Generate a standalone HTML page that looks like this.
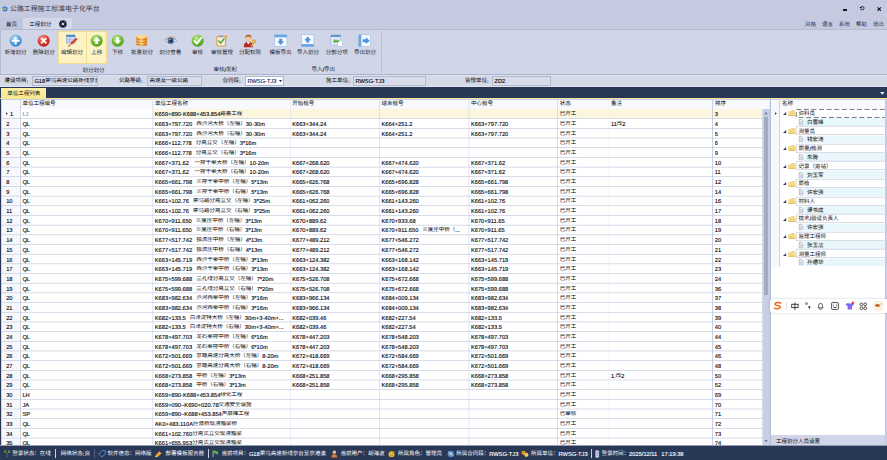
<!DOCTYPE html>
<html lang="zh-CN">
<head>
<meta charset="utf-8">
<title>公路工程施工标准电子化平台</title>
<style>
*{box-sizing:border-box;margin:0;padding:0}
html,body{width:887px;height:460px;overflow:hidden;background:#c5cae0}
body{position:relative;font-family:"Liberation Sans","Noto Sans CJK SC",sans-serif;font-size:5.73px;line-height:8.8px;color:#06060c;text-rendering:geometricPrecision;-webkit-text-stroke:.12px currentColor}
.a{position:absolute}
svg.a{overflow:visible}
.t{position:absolute;white-space:pre;height:8.8px;line-height:8.8px;word-spacing:2.4px}
.c{position:relative;display:inline-block;vertical-align:top;font-family:"Liberation Sans","Noto Sans CJK SC",sans-serif;font-size:5.5px;width:1em;height:1.09em;line-height:1.09em;overflow:visible;color:inherit;-webkit-text-stroke:0}
.cell{overflow:hidden}
.w{color:#fff}
.ti .c{font-size:6.9px;height:1.1em;color:#343848}
.m .c{color:#262e58}
.g .c{color:#23252f}
.in{position:absolute;height:10px;background:#d8dcea;border:1px solid #b0b8cc;box-shadow:inset -.5px -.5px 0 #e3e6f0}
.hl{background:#fdf2c4;border:1px solid #f3dc8f}
.btn{position:absolute;top:34px;width:14px;height:14px}
.btn>svg{position:absolute;left:0;top:0;width:13.4px;height:13.4px;overflow:visible}
</style>
</head>
<body>
<svg class="a" style="left:1.7px;top:6.4px;width:5.7px;height:5.7px" viewBox="0 0 12 12"><circle cx="6" cy="6" r="5.7" fill="#2f78d2"/><path d="M.6 5.2 H6.4 V3.2 L9.4 6.2 L6.4 9.2 V7.4 H3.6 L2.6 10 L.6 7.6Z" fill="#f6cf2e"/><path d="M3.4 2.2 Q6 .6 8.6 2.2" stroke="#cfe4fb" stroke-width="1" fill="none"/></svg>
<div class="t ti" style="left:10px;top:5.6px;height:8px"><span class="c" style="width:13em">公路工程施工标准电子化平台</span></div>
<div class="a" style="left:842.8px;top:8.9px;width:4.5px;height:1.9px;background:#14141c"></div>
<svg class="a" style="left:858.6px;top:5.2px;width:5.9px;height:5.9px" viewBox="0 0 12 12"><path d="M3.2 9.8 H7 A3.4 3.4 0 1 0 3.6 5.6" fill="none" stroke="#14141c" stroke-width="1.7"/><path d="M.6 5.4 L5.6 3.2 L5.2 7.8Z" fill="#14141c"/></svg>
<svg class="a" style="left:876.9px;top:6.9px;width:4.4px;height:4.4px" viewBox="0 0 10 10"><path d="M1 1 L9 9 M9 1 L1 9" stroke="#14141c" stroke-width="2.3"/><rect x="3.4" y="3.4" width="3.2" height="3.2" fill="#14141c"/></svg>
<div class="a" style="left:0px;top:18px;width:23px;height:11px;background:#c0c6dc"></div>
<div class="a" style="left:23px;top:18px;width:49px;height:12px;background:#d4d9ea"></div>
<div class="t" style="left:6px;top:21.5px"><span class="c" style="width:2em">首页</span></div>
<div class="t" style="left:29.3px;top:21.5px"><span class="c" style="width:4em">工程划分</span></div>
<svg class="a" style="left:58.9px;top:19.9px;width:7.8px;height:7.8px" viewBox="0 0 16 16"><circle cx="8" cy="8" r="7.7" fill="#1d2233"/><path d="M5.2 5.2 L10.8 10.8 M10.8 5.2 L5.2 10.8" stroke="#fff" stroke-width="1.9"/></svg>
<div class="t m" style="left:805px;top:21.7px"><span class="c" style="width:2em">风格</span></div>
<div class="t m" style="left:822px;top:21.7px"><span class="c" style="width:2em">语言</span></div>
<div class="t m" style="left:839px;top:21.7px"><span class="c" style="width:2em">系统</span></div>
<div class="t m" style="left:856px;top:21.7px"><span class="c" style="width:2em">帮助</span></div>
<div class="t m" style="left:873px;top:21.7px"><span class="c" style="width:2em">退出</span></div>
<div class="a" style="left:0px;top:29px;width:887px;height:46px;background:#d0d6e7;border-top:1px solid #b3bbd1;border-bottom:1px solid #a9b2c8"></div>
<div class="a" style="left:0px;top:30px;width:1px;height:44px;background:#b4bcd2"></div>
<div class="a hl" style="left:58px;top:31px;width:29px;height:33px"></div>
<div class="a hl" style="left:87px;top:31px;width:20px;height:33px;border-left:none"></div>
<div class="btn" style="left:8.7px"><svg viewBox="0 0 28 28"><defs><radialGradient id="gA" cx=".4" cy=".3" r=".8"><stop offset="0" stop-color="#bfe0fb"/><stop offset=".55" stop-color="#4f9fe0"/><stop offset="1" stop-color="#2a6fc0"/></radialGradient></defs><circle cx="14" cy="14" r="12.6" fill="url(#gA)" stroke="#8fb5dc" stroke-width="1"/><path d="M14 7.5 V20.5 M7.5 14 H20.5" stroke="#fff" stroke-width="4" stroke-linecap="round"/></svg></div>
<div class="t g" style="left:4.4px;top:50.4px"><span class="c" style="width:4em">新增划分</span></div>
<div class="btn" style="left:37.1px"><svg viewBox="0 0 28 28"><defs><radialGradient id="gD" cx=".4" cy=".3" r=".8"><stop offset="0" stop-color="#f59a8f"/><stop offset=".55" stop-color="#d8362b"/><stop offset="1" stop-color="#a81d15"/></radialGradient></defs><circle cx="14" cy="14" r="12.6" fill="url(#gD)"/><path d="M9.5 9.5 L18.5 18.5 M18.5 9.5 L9.5 18.5" stroke="#fff" stroke-width="3.6" stroke-linecap="round"/></svg></div>
<div class="t g" style="left:32.8px;top:50.4px"><span class="c" style="width:4em">删除划分</span></div>
<div class="btn" style="left:65.4px"><svg viewBox="0 0 28 28"><rect x="3" y="2" width="18" height="17" fill="#cfe2f6" stroke="#5c8fc6" stroke-width="1"/><rect x="3" y="2" width="18" height="4" fill="#4f86c6"/><path d="M3 11 H21 M3 15 H21 M10 6 V19" stroke="#7fa6d3" stroke-width="1"/><path d="M9 25 L11 19 L23 8 L26.5 11 L14.5 22.5 Z" fill="#d9412f"/><path d="M9 25 L11 19 L14.5 22.5 Z" fill="#e9c58a"/><path d="M6.5 27 L10 24 L8 22.5Z" fill="#333"/></svg></div>
<div class="t g" style="left:61.1px;top:50.4px"><span class="c" style="width:4em">编辑划分</span></div>
<div class="btn" style="left:90.1px"><svg viewBox="0 0 28 28"><defs><radialGradient id="gU" cx=".4" cy=".3" r=".8"><stop offset="0" stop-color="#c6ec97"/><stop offset=".55" stop-color="#6db830"/><stop offset="1" stop-color="#4b9418"/></radialGradient></defs><circle cx="14" cy="14" r="12.6" fill="url(#gU)"/><path d="M14 6.5 L21 14.5 H16.8 V21 H11.2 V14.5 H7 Z" fill="#fff"/></svg></div>
<div class="t g" style="left:91.3px;top:50.4px"><span class="c" style="width:2em">上移</span></div>
<div class="btn" style="left:110.7px"><svg viewBox="0 0 28 28"><circle cx="14" cy="14" r="12.6" fill="url(#gU)"/><path d="M14 21.5 L21 13.5 H16.8 V7 H11.2 V13.5 H7 Z" fill="#fff"/></svg></div>
<div class="t g" style="left:111.9px;top:50.4px"><span class="c" style="width:2em">下移</span></div>
<div class="btn" style="left:135.3px"><svg viewBox="0 0 28 28"><defs><linearGradient id="gB" x1="0" x2="1"><stop offset="0" stop-color="#e88a1a"/><stop offset=".45" stop-color="#ffe2a0"/><stop offset="1" stop-color="#e27c10"/></linearGradient></defs><rect x="3" y="2.5" width="22" height="23" rx="4.5" fill="url(#gB)"/><ellipse cx="14" cy="5" rx="11" ry="3" fill="#ffd98a"/><path d="M3 10.5 Q14 14.5 25 10.5 M3 16 Q14 20 25 16 M3 21.5 Q14 25.5 25 21.5" stroke="#c8690c" stroke-width="1.3" fill="none"/></svg></div>
<div class="t g" style="left:131px;top:50.4px"><span class="c" style="width:4em">批量划分</span></div>
<div class="btn" style="left:163.5px"><svg viewBox="0 0 28 28"><path d="M1.5 14 Q14 2.5 26.5 14 Q14 25 1.5 14Z" fill="#eef2f8" stroke="#7b8797" stroke-width="1.3"/><path d="M2 12 Q14 0 26 11" stroke="#c89060" stroke-width="1.6" fill="none"/><circle cx="14" cy="14" r="6.6" fill="#3f6596"/><circle cx="14" cy="14" r="3.2" fill="#1a2a44"/><circle cx="11.8" cy="11.8" r="1.5" fill="#e8f0fb"/></svg></div>
<div class="t g" style="left:159.2px;top:50.4px"><span class="c" style="width:4em">划分查看</span></div>
<div class="btn" style="left:190.7px"><svg viewBox="0 0 28 28"><circle cx="14" cy="14" r="12.6" fill="url(#gU)"/><path d="M7 14.5 L12 20 L22 7.5" stroke="#fff" stroke-width="3.8" fill="none" stroke-linecap="round" stroke-linejoin="round"/></svg></div>
<div class="t g" style="left:191.9px;top:50.4px"><span class="c" style="width:2em">审核</span></div>
<div class="btn" style="left:215.3px"><svg viewBox="0 0 28 28"><rect x="4" y="5" width="18" height="20" rx="2" fill="#f7efe0" stroke="#e09b3a" stroke-width="2.2"/><rect x="9" y="2.5" width="8" height="5" rx="1.5" fill="#9aa6b6"/><path d="M8 14.5 L12 19 L19 10" stroke="#55a52a" stroke-width="3" fill="none" stroke-linecap="round"/><path d="M23 1 L24.5 5 L28 6 L24.5 7.5 L23 11 L21.5 7.5 L18 6 L21.5 5 Z" fill="#f2a42c"/></svg></div>
<div class="t g" style="left:211px;top:50.4px"><span class="c" style="width:4em">审核管理</span></div>
<div class="btn" style="left:243.3px"><svg viewBox="1.5 1.5 26 26"><path d="M3 27 Q3 16.5 12 16.5 Q21 16.5 21 27 Z" fill="#b82a22"/><path d="M8.5 17 L12 22 L15.5 17Z" fill="#f4f4f4"/><circle cx="12" cy="10" r="6" fill="#f0c49a"/><path d="M5.8 9.5 Q6 2.8 12 3 Q18 2.8 18.2 9.5 Q15 5.5 12 6.2 Q9 5.5 5.8 9.5Z" fill="#9b5a22"/><circle cx="23" cy="16" r="3.4" fill="#f0b63a" stroke="#c98a1a" stroke-width=".8"/><path d="M21.5 18.5 L16 25 L18.5 26.5 L23.5 19.5Z" fill="#e8a92c"/></svg></div>
<div class="t g" style="left:239px;top:50.4px"><span class="c" style="width:4em">分配权限</span></div>
<div class="btn" style="left:273.8px"><svg viewBox="0 0 28 28"><rect x="1" y="1.5" width="26" height="25" fill="#f5f8fd" stroke="#9dbbe0" stroke-width="1.3"/><rect x="1" y="1.5" width="26" height="5.5" fill="#6aa5e6"/><path d="M14 23 L21 15 H17 V10 H11 V15 H7 Z" fill="#4a94e2"/></svg></div>
<div class="t g" style="left:269.5px;top:50.4px"><span class="c" style="width:4em">模板导出</span></div>
<div class="btn" style="left:301.3px"><svg viewBox="0 0 28 28"><rect x="1" y="1.5" width="26" height="25" fill="#f5f8fd" stroke="#9dbbe0" stroke-width="1.3"/><rect x="1" y="21" width="26" height="5.5" fill="#6aa5e6"/><path d="M14 5 L21 13 H17 V18 H11 V13 H7 Z" fill="#4a94e2"/></svg></div>
<div class="t g" style="left:297px;top:50.4px"><span class="c" style="width:4em">导入划分</span></div>
<div class="btn" style="left:330px"><svg viewBox="0 0 28 28"><rect x="2" y="2" width="20" height="21" fill="#f3f7fc" stroke="#8fb1d6" stroke-width="1.2"/><rect x="2" y="2" width="20" height="4.5" fill="#5e95d2"/><path d="M2 12 H22 M2 17.5 H22 M9 6.5 V23 M15.5 6.5 V23" stroke="#a9c3e2" stroke-width="1"/><rect x="15.5" y="13" width="11" height="13" fill="#fff" stroke="#8fb1d6" stroke-width="1"/><path d="M6 15 L11 10.5 V13 H17 L21 15 L17 17 H11 V19.5 Z" fill="#5bb030"/></svg></div>
<div class="t g" style="left:325.7px;top:50.4px"><span class="c" style="width:4em">分部分项</span></div>
<div class="btn" style="left:358.3px"><svg viewBox="0 0 28 28"><rect x="1.5" y="1.5" width="25" height="25" fill="#f5f8fd" stroke="#9dbbe0" stroke-width="1.3"/><rect x="1.5" y="1.5" width="5.5" height="25" fill="#6aa5e6"/><path d="M24.5 14 L16.5 7 V11 H10 V17 H16.5 V21 Z" fill="#4a94e2"/></svg></div>
<div class="t g" style="left:354px;top:50.4px"><span class="c" style="width:4em">导出划分</span></div>
<div class="t g" style="left:82.6px;top:67.5px"><span class="c" style="width:4em">划分划分</span></div>
<div class="t g" style="left:213.5px;top:67px"><span class="c" style="width:2em">审核</span>/<span class="c" style="width:2em">发起</span></div>
<div class="t g" style="left:311.5px;top:67px"><span class="c" style="width:2em">导入</span>/<span class="c" style="width:2em">导出</span></div>
<div class="a" style="left:187px;top:31px;width:1px;height:42px;background:#d4d9e9"></div>
<div class="a" style="left:381px;top:31px;width:1px;height:42px;background:#b9c1d6"></div>
<div class="a" style="left:0px;top:75px;width:887px;height:12px;background:#d5dae9;border-top:1px solid #dfe3ee;border-bottom:1px solid #e0e4ef"></div>
<div class="t" style="left:4.6px;top:78px"><span class="c" style="width:4em">建设项目</span>:</div>
<div class="in" style="left:32px;top:76px;width:66px"></div>
<div class="t cell" style="left:34.4px;top:78px;width:62.4px">G18<span class="c" style="width:16em">荣乌高速公路新线京台高速至京港澳</span></div>
<div class="t" style="left:119px;top:78px"><span class="c" style="width:4em">公路等级</span>:</div>
<div class="in" style="left:147px;top:76px;width:55px"></div>
<div class="t cell" style="left:149.4px;top:78px;width:51.4px"><span class="c" style="width:7em">高速及一级公路</span></div>
<div class="t" style="left:222.6px;top:78px"><span class="c" style="width:3em">合同段</span>:</div>
<div class="in" style="left:245px;top:76px;width:39px;background:#fff"></div>
<div class="t cell" style="left:247.4px;top:78px;width:35.4px;color:#1c1c5c">RWSG-TJ3</div>
<svg class="a" style="left:278.6px;top:80.4px;width:3px;height:2.2px" viewBox="0 0 6 4"><path d="M0 0 H6 L3 4Z" fill="#222"/></svg>
<div class="t" style="left:326px;top:78px"><span class="c" style="width:4em">施工单位</span>:</div>
<div class="in" style="left:353px;top:76px;width:73px"></div>
<div class="t cell" style="left:355.4px;top:78px;width:69.4px">RWSG-TJ3</div>
<div class="t" style="left:465px;top:78px"><span class="c" style="width:4em">监理单位</span>:</div>
<div class="in" style="left:492px;top:76px;width:59px"></div>
<div class="t cell" style="left:494.4px;top:78px;width:55.4px">ZD2</div>
<div class="a" style="left:0px;top:87px;width:887px;height:11px;background:#2a3857"></div>
<div class="a" style="left:1px;top:88px;width:45px;height:10px;background:linear-gradient(#fdf1a6,#f9e790)"></div>
<div class="t" style="left:7.2px;top:90.9px"><span class="c" style="width:6em">单位工程列表</span></div>
<svg class="a" style="left:879.6px;top:91.6px;width:4.6px;height:2.8px" viewBox="0 0 8 5"><path d="M0 0 H8 L4 5Z" fill="#eef1f8"/></svg>
<div class="a" style="left:0px;top:98px;width:887px;height:1px;background:#f3e394"></div>
<div class="a" style="left:0px;top:99px;width:1px;height:347px;background:#2a3857"></div>
<div class="a" style="left:1px;top:99px;width:769px;height:347px;background:#fff"></div>
<div class="a" style="left:1px;top:99px;width:769px;height:10px;background:#f8f9fc;border-top:1px solid #cdd3e3"></div>
<div class="t" style="left:22.5px;top:101px"><span class="c" style="width:6em">单位工程编号</span></div>
<div class="t" style="left:154.9px;top:101px"><span class="c" style="width:6em">单位工程名称</span></div>
<div class="t" style="left:292.3px;top:101px"><span class="c" style="width:4em">开始桩号</span></div>
<div class="t" style="left:381.5px;top:101px"><span class="c" style="width:4em">结束桩号</span></div>
<div class="t" style="left:471px;top:101px"><span class="c" style="width:4em">中心桩号</span></div>
<div class="t" style="left:559.8px;top:101px"><span class="c" style="width:2em">状态</span></div>
<div class="t" style="left:611px;top:101px"><span class="c" style="width:2em">备注</span></div>
<div class="t" style="left:714.9px;top:101px"><span class="c" style="width:2em">排序</span></div>
<div class="a" style="left:1px;top:109px;width:19.3px;height:337px;background:#f7f8fc"></div>
<div class="a" style="left:153.2px;top:108.75px;width:609px;height:9.5px;background:#fdf6df"></div>
<div class="a" style="left:762.3px;top:109px;width:7.7px;height:337px;background:linear-gradient(90deg,#d8dcea,#c8cfe2 25%,#c8cfe2)"></div>
<div class="a" style="left:763.8px;top:117.4px;width:4.3px;height:177.4px;background:#a0aac2"></div>
<svg class="a" style="left:763.9px;top:112px;width:4px;height:2.3px" viewBox="0 0 8 5"><path d="M0 5 H8 L4 0Z" fill="#6a7698"/></svg>
<svg class="a" style="left:763.9px;top:440px;width:4px;height:2.3px" viewBox="0 0 8 5"><path d="M0 0 H8 L4 5Z" fill="#6a7698"/></svg>
<svg class="a" style="left:0px;top:0px;width:887px;height:460px" viewBox="0 0 887 460"><rect x="1.1" y="99" width=".55" height="347" fill="#b9c1d8"/><rect x="20.2" y="100" width=".8" height="346" fill="#c3c9de"/><rect x="769.8" y="99" width="1" height="347" fill="#b3bcd4"/><rect x="152.6" y="100" width="0.5" height="346" fill="#c4c9dd"/><rect x="290" y="100" width="0.5" height="346" fill="#dde0ec"/><rect x="379.2" y="100" width="0.5" height="346" fill="#c9cde0"/><rect x="468.7" y="100" width="0.5" height="346" fill="#c9cde0"/><rect x="557.4" y="100" width="0.55" height="346" fill="#c0c5da"/><rect x="608.7" y="100" width="0.4" height="346" fill="#e6e8f1"/><rect x="712.2" y="100" width="0.85" height="346" fill="#bfc5db"/><rect x="1.6" y="118.40" width="760.7" height=".55" fill="#b9bfd8"/><rect x="1.6" y="128.08" width="760.7" height=".55" fill="#b9bfd8"/><rect x="1.6" y="137.75" width="760.7" height=".55" fill="#b9bfd8"/><rect x="1.6" y="147.43" width="760.7" height=".55" fill="#b9bfd8"/><rect x="1.6" y="157.11" width="760.7" height=".55" fill="#b9bfd8"/><rect x="1.6" y="166.79" width="760.7" height=".55" fill="#b9bfd8"/><rect x="1.6" y="176.47" width="760.7" height=".55" fill="#b9bfd8"/><rect x="1.6" y="186.14" width="760.7" height=".55" fill="#b9bfd8"/><rect x="1.6" y="195.82" width="760.7" height=".55" fill="#b9bfd8"/><rect x="1.6" y="205.50" width="760.7" height=".55" fill="#b9bfd8"/><rect x="1.6" y="215.18" width="760.7" height=".55" fill="#b9bfd8"/><rect x="1.6" y="224.86" width="760.7" height=".55" fill="#b9bfd8"/><rect x="1.6" y="234.53" width="760.7" height=".55" fill="#b9bfd8"/><rect x="1.6" y="244.21" width="760.7" height=".55" fill="#b9bfd8"/><rect x="1.6" y="253.89" width="760.7" height=".55" fill="#b9bfd8"/><rect x="1.6" y="263.57" width="760.7" height=".55" fill="#b9bfd8"/><rect x="1.6" y="273.25" width="760.7" height=".55" fill="#b9bfd8"/><rect x="1.6" y="282.92" width="760.7" height=".55" fill="#b9bfd8"/><rect x="1.6" y="292.60" width="760.7" height=".55" fill="#b9bfd8"/><rect x="1.6" y="302.28" width="760.7" height=".55" fill="#b9bfd8"/><rect x="1.6" y="311.96" width="760.7" height=".55" fill="#b9bfd8"/><rect x="1.6" y="321.64" width="760.7" height=".55" fill="#b9bfd8"/><rect x="1.6" y="331.31" width="760.7" height=".55" fill="#b9bfd8"/><rect x="1.6" y="340.99" width="760.7" height=".55" fill="#b9bfd8"/><rect x="1.6" y="350.67" width="760.7" height=".55" fill="#b9bfd8"/><rect x="1.6" y="360.35" width="760.7" height=".55" fill="#b9bfd8"/><rect x="1.6" y="370.03" width="760.7" height=".55" fill="#b9bfd8"/><rect x="1.6" y="379.70" width="760.7" height=".55" fill="#b9bfd8"/><rect x="1.6" y="389.38" width="760.7" height=".55" fill="#b9bfd8"/><rect x="1.6" y="399.06" width="760.7" height=".55" fill="#b9bfd8"/><rect x="1.6" y="408.74" width="760.7" height=".55" fill="#b9bfd8"/><rect x="1.6" y="418.42" width="760.7" height=".55" fill="#b9bfd8"/><rect x="1.6" y="428.09" width="760.7" height=".55" fill="#b9bfd8"/><rect x="1.6" y="437.77" width="760.7" height=".55" fill="#b9bfd8"/><rect x="1.6" y="447.45" width="760.7" height=".55" fill="#b9bfd8"/></svg>
<svg class="a" style="left:6px;top:112.25px;width:1.8px;height:3px" viewBox="0 0 4 6"><path d="M0 0 L4 3 L0 6Z" fill="#222"/></svg>
<div class="t" style="left:9.9px;top:111px">1</div>
<div class="t cell" style="left:22.4px;top:111px;width:129px;color:#8d86b8">LJ</div>
<div class="t cell" style="left:154.8px;top:111px;width:134px">K659+890-K688+453.854<span class="c" style="width:4em">路基工程</span></div>
<div class="t cell" style="left:559.7px;top:111.35px;width:47.8px"><span class="c" style="width:3em">已开工</span></div>
<div class="t cell" style="left:714.8px;top:111px;width:46.2px">3</div>
<div class="t" style="left:6.2px;top:121px">2</div>
<div class="t cell" style="left:22.4px;top:121px;width:129px">QL</div>
<div class="t cell" style="left:154.8px;top:121px;width:134px">K663+797.720 <span class="c" style="width:9em">西沙河大桥（左幅）</span>30-30m</div>
<div class="t cell" style="left:292.2px;top:121px;width:85.8px">K663+344.24</div>
<div class="t cell" style="left:381.4px;top:121px;width:86.1px">K664+251.2</div>
<div class="t cell" style="left:470.9px;top:121px;width:85.4px">K663+797.720</div>
<div class="t cell" style="left:559.7px;top:121.03px;width:47.8px"><span class="c" style="width:3em">已开工</span></div>
<div class="t cell" style="left:610.9px;top:121px;width:100.5px">11<span class="c" style="width:1em">改</span>2</div>
<div class="t cell" style="left:714.8px;top:121px;width:46.2px">4</div>
<div class="t" style="left:6.2px;top:131px">3</div>
<div class="t cell" style="left:22.4px;top:131px;width:129px">QL</div>
<div class="t cell" style="left:154.8px;top:131px;width:134px">K663+797.720 <span class="c" style="width:9em">西沙河大桥（右幅）</span>30-30m</div>
<div class="t cell" style="left:292.2px;top:131px;width:85.8px">K663+344.24</div>
<div class="t cell" style="left:381.4px;top:131px;width:86.1px">K664+251.2</div>
<div class="t cell" style="left:470.9px;top:131px;width:85.4px">K663+797.720</div>
<div class="t cell" style="left:559.7px;top:130.71px;width:47.8px"><span class="c" style="width:3em">已开工</span></div>
<div class="t cell" style="left:714.8px;top:131px;width:46.2px">5</div>
<div class="t" style="left:6.2px;top:140px">4</div>
<div class="t cell" style="left:22.4px;top:140px;width:129px">QL</div>
<div class="t cell" style="left:154.8px;top:140px;width:134px">K666+112.778 <span class="c" style="width:8em">分离立交（左幅）</span>3*16m</div>
<div class="t cell" style="left:559.7px;top:140.38px;width:47.8px"><span class="c" style="width:3em">已开工</span></div>
<div class="t cell" style="left:714.8px;top:140px;width:46.2px">6</div>
<div class="t" style="left:6.2px;top:150px">5</div>
<div class="t cell" style="left:22.4px;top:150px;width:129px">QL</div>
<div class="t cell" style="left:154.8px;top:150px;width:134px">K666+112.778 <span class="c" style="width:8em">分离立交（右幅）</span>3*16m</div>
<div class="t cell" style="left:559.7px;top:150.06px;width:47.8px"><span class="c" style="width:3em">已开工</span></div>
<div class="t cell" style="left:714.8px;top:150px;width:46.2px">9</div>
<div class="t" style="left:6.2px;top:160px">6</div>
<div class="t cell" style="left:22.4px;top:160px;width:129px">QL</div>
<div class="t cell" style="left:154.8px;top:160px;width:134px">K667+371.62<span class="c" style="width:11em">　一排干渠大桥（左幅）</span>10-20m</div>
<div class="t cell" style="left:292.2px;top:160px;width:85.8px">K667+268.620</div>
<div class="t cell" style="left:381.4px;top:160px;width:86.1px">K667+474.620</div>
<div class="t cell" style="left:470.9px;top:160px;width:85.4px">K667+371.62</div>
<div class="t cell" style="left:559.7px;top:159.74px;width:47.8px"><span class="c" style="width:3em">已开工</span></div>
<div class="t cell" style="left:714.8px;top:160px;width:46.2px">10</div>
<div class="t" style="left:6.2px;top:169px">7</div>
<div class="t cell" style="left:22.4px;top:169px;width:129px">QL</div>
<div class="t cell" style="left:154.8px;top:169px;width:134px">K667+371.62<span class="c" style="width:11em">　一排干渠大桥（右幅）</span>10-20m</div>
<div class="t cell" style="left:292.2px;top:169px;width:85.8px">K667+268.620</div>
<div class="t cell" style="left:381.4px;top:169px;width:86.1px">K667+474.620</div>
<div class="t cell" style="left:470.9px;top:169px;width:85.4px">K667+371.62</div>
<div class="t cell" style="left:559.7px;top:169.42px;width:47.8px"><span class="c" style="width:3em">已开工</span></div>
<div class="t cell" style="left:714.8px;top:169px;width:46.2px">11</div>
<div class="t" style="left:6.2px;top:179px">8</div>
<div class="t cell" style="left:22.4px;top:179px;width:129px">QL</div>
<div class="t cell" style="left:154.8px;top:179px;width:134px">K665+661.798 <span class="c" style="width:10em">三排干渠中桥（左幅）</span>5*13m</div>
<div class="t cell" style="left:292.2px;top:179px;width:85.8px">K665+626.768</div>
<div class="t cell" style="left:381.4px;top:179px;width:86.1px">K665+696.828</div>
<div class="t cell" style="left:470.9px;top:179px;width:85.4px">K665+661.798</div>
<div class="t cell" style="left:559.7px;top:179.1px;width:47.8px"><span class="c" style="width:3em">已开工</span></div>
<div class="t cell" style="left:714.8px;top:179px;width:46.2px">12</div>
<div class="t" style="left:6.2px;top:189px">9</div>
<div class="t cell" style="left:22.4px;top:189px;width:129px">QL</div>
<div class="t cell" style="left:154.8px;top:189px;width:134px">K665+661.798 <span class="c" style="width:10em">三排干渠中桥（右幅）</span>5*13m</div>
<div class="t cell" style="left:292.2px;top:189px;width:85.8px">K665+626.768</div>
<div class="t cell" style="left:381.4px;top:189px;width:86.1px">K665+696.828</div>
<div class="t cell" style="left:470.9px;top:189px;width:85.4px">K665+661.798</div>
<div class="t cell" style="left:559.7px;top:188.77px;width:47.8px"><span class="c" style="width:3em">已开工</span></div>
<div class="t cell" style="left:714.8px;top:189px;width:46.2px">14</div>
<div class="t" style="left:6.2px;top:198px">10</div>
<div class="t cell" style="left:22.4px;top:198px;width:129px">QL</div>
<div class="t cell" style="left:154.8px;top:198px;width:134px">K661+102.76 <span class="c" style="width:11em">荣乌路分离立交（左幅）</span>3*25m</div>
<div class="t cell" style="left:292.2px;top:198px;width:85.8px">K661+062.260</div>
<div class="t cell" style="left:381.4px;top:198px;width:86.1px">K661+143.260</div>
<div class="t cell" style="left:470.9px;top:198px;width:85.4px">K661+102.76</div>
<div class="t cell" style="left:559.7px;top:198.45px;width:47.8px"><span class="c" style="width:3em">已开工</span></div>
<div class="t cell" style="left:714.8px;top:198px;width:46.2px">16</div>
<div class="t" style="left:6.2px;top:208px">11</div>
<div class="t cell" style="left:22.4px;top:208px;width:129px">QL</div>
<div class="t cell" style="left:154.8px;top:208px;width:134px">K661+102.76 <span class="c" style="width:11em">荣乌路分离立交（右幅）</span>3*25m</div>
<div class="t cell" style="left:292.2px;top:208px;width:85.8px">K661+062.260</div>
<div class="t cell" style="left:381.4px;top:208px;width:86.1px">K661+143.260</div>
<div class="t cell" style="left:470.9px;top:208px;width:85.4px">K661+102.76</div>
<div class="t cell" style="left:559.7px;top:208.13px;width:47.8px"><span class="c" style="width:3em">已开工</span></div>
<div class="t cell" style="left:714.8px;top:208px;width:46.2px">17</div>
<div class="t" style="left:6.2px;top:218px">12</div>
<div class="t cell" style="left:22.4px;top:218px;width:129px">QL</div>
<div class="t cell" style="left:154.8px;top:218px;width:134px">K670+911.650 <span class="c" style="width:9em">三度庄中桥（左幅）</span>3*13m</div>
<div class="t cell" style="left:292.2px;top:218px;width:85.8px">K670+889.62</div>
<div class="t cell" style="left:381.4px;top:218px;width:86.1px">K670+933.68</div>
<div class="t cell" style="left:470.9px;top:218px;width:85.4px">K670+911.65</div>
<div class="t cell" style="left:559.7px;top:217.81px;width:47.8px"><span class="c" style="width:3em">已开工</span></div>
<div class="t cell" style="left:714.8px;top:218px;width:46.2px">18</div>
<div class="t" style="left:6.2px;top:227px">13</div>
<div class="t cell" style="left:22.4px;top:227px;width:129px">QL</div>
<div class="t cell" style="left:154.8px;top:227px;width:134px">K670+911.650 <span class="c" style="width:9em">三度庄中桥（右幅）</span>3*13m</div>
<div class="t cell" style="left:292.2px;top:227px;width:85.8px">K670+889.62</div>
<div class="t cell" style="left:381.4px;top:227px;width:86.1px">K670+911.650 <span class="c" style="width:6em">三度庄中桥（</span>...</div>
<div class="t cell" style="left:470.9px;top:227px;width:85.4px">K670+911.65</div>
<div class="t cell" style="left:559.7px;top:227.49px;width:47.8px"><span class="c" style="width:3em">已开工</span></div>
<div class="t cell" style="left:714.8px;top:227px;width:46.2px">19</div>
<div class="t" style="left:6.2px;top:237px">14</div>
<div class="t cell" style="left:22.4px;top:237px;width:129px">QL</div>
<div class="t cell" style="left:154.8px;top:237px;width:134px">K677+517.742 <span class="c" style="width:9em">独流庄中桥（左幅）</span>4*13m</div>
<div class="t cell" style="left:292.2px;top:237px;width:85.8px">K677+489.212</div>
<div class="t cell" style="left:381.4px;top:237px;width:86.1px">K677+546.272</div>
<div class="t cell" style="left:470.9px;top:237px;width:85.4px">K677+517.742</div>
<div class="t cell" style="left:559.7px;top:237.16px;width:47.8px"><span class="c" style="width:3em">已开工</span></div>
<div class="t cell" style="left:714.8px;top:237px;width:46.2px">20</div>
<div class="t" style="left:6.2px;top:247px">15</div>
<div class="t cell" style="left:22.4px;top:247px;width:129px">QL</div>
<div class="t cell" style="left:154.8px;top:247px;width:134px">K677+517.742 <span class="c" style="width:9em">独流庄中桥（右幅）</span>4*13m</div>
<div class="t cell" style="left:292.2px;top:247px;width:85.8px">K677+489.212</div>
<div class="t cell" style="left:381.4px;top:247px;width:86.1px">K677+546.272</div>
<div class="t cell" style="left:470.9px;top:247px;width:85.4px">K677+517.742</div>
<div class="t cell" style="left:559.7px;top:246.84px;width:47.8px"><span class="c" style="width:3em">已开工</span></div>
<div class="t cell" style="left:714.8px;top:247px;width:46.2px">21</div>
<div class="t" style="left:6.2px;top:257px">16</div>
<div class="t cell" style="left:22.4px;top:257px;width:129px">QL</div>
<div class="t cell" style="left:154.8px;top:257px;width:134px">K663+145.719 <span class="c" style="width:10em">西沙干渠中桥（左幅）</span>3*13m</div>
<div class="t cell" style="left:292.2px;top:257px;width:85.8px">K663+124.382</div>
<div class="t cell" style="left:381.4px;top:257px;width:86.1px">K663+168.142</div>
<div class="t cell" style="left:470.9px;top:257px;width:85.4px">K663+145.719</div>
<div class="t cell" style="left:559.7px;top:256.52px;width:47.8px"><span class="c" style="width:3em">已开工</span></div>
<div class="t cell" style="left:714.8px;top:257px;width:46.2px">22</div>
<div class="t" style="left:6.2px;top:266px">17</div>
<div class="t cell" style="left:22.4px;top:266px;width:129px">QL</div>
<div class="t cell" style="left:154.8px;top:266px;width:134px">K663+145.719 <span class="c" style="width:10em">西沙干渠中桥（右幅）</span>3*13m</div>
<div class="t cell" style="left:292.2px;top:266px;width:85.8px">K663+124.382</div>
<div class="t cell" style="left:381.4px;top:266px;width:86.1px">K663+168.142</div>
<div class="t cell" style="left:470.9px;top:266px;width:85.4px">K663+145.719</div>
<div class="t cell" style="left:559.7px;top:266.2px;width:47.8px"><span class="c" style="width:3em">已开工</span></div>
<div class="t cell" style="left:714.8px;top:266px;width:46.2px">23</div>
<div class="t" style="left:6.2px;top:276px">18</div>
<div class="t cell" style="left:22.4px;top:276px;width:129px">QL</div>
<div class="t cell" style="left:154.8px;top:276px;width:134px">K675+599.688 <span class="c" style="width:11em">兰孔线分离立交（左幅）</span>7*20m</div>
<div class="t cell" style="left:292.2px;top:276px;width:85.8px">K675+526.708</div>
<div class="t cell" style="left:381.4px;top:276px;width:86.1px">K675+672.668</div>
<div class="t cell" style="left:470.9px;top:276px;width:85.4px">K675+599.688</div>
<div class="t cell" style="left:559.7px;top:275.88px;width:47.8px"><span class="c" style="width:3em">已开工</span></div>
<div class="t cell" style="left:714.8px;top:276px;width:46.2px">24</div>
<div class="t" style="left:6.2px;top:286px">19</div>
<div class="t cell" style="left:22.4px;top:286px;width:129px">QL</div>
<div class="t cell" style="left:154.8px;top:286px;width:134px">K675+599.688 <span class="c" style="width:11em">兰孔线分离立交（右幅）</span>7*20m</div>
<div class="t cell" style="left:292.2px;top:286px;width:85.8px">K675+526.708</div>
<div class="t cell" style="left:381.4px;top:286px;width:86.1px">K675+672.668</div>
<div class="t cell" style="left:470.9px;top:286px;width:85.4px">K675+599.688</div>
<div class="t cell" style="left:559.7px;top:285.55px;width:47.8px"><span class="c" style="width:3em">已开工</span></div>
<div class="t cell" style="left:714.8px;top:286px;width:46.2px">36</div>
<div class="t" style="left:6.2px;top:295px">20</div>
<div class="t cell" style="left:22.4px;top:295px;width:129px">QL</div>
<div class="t cell" style="left:154.8px;top:295px;width:134px">K683+982.634 <span class="c" style="width:10em">沙河西渠中桥（左幅）</span>3*16m</div>
<div class="t cell" style="left:292.2px;top:295px;width:85.8px">K683+966.134</div>
<div class="t cell" style="left:381.4px;top:295px;width:86.1px">K684+009.134</div>
<div class="t cell" style="left:470.9px;top:295px;width:85.4px">K683+982.634</div>
<div class="t cell" style="left:559.7px;top:295.23px;width:47.8px"><span class="c" style="width:3em">已开工</span></div>
<div class="t cell" style="left:714.8px;top:295px;width:46.2px">37</div>
<div class="t" style="left:6.2px;top:305px">21</div>
<div class="t cell" style="left:22.4px;top:305px;width:129px">QL</div>
<div class="t cell" style="left:154.8px;top:305px;width:134px">K683+982.634 <span class="c" style="width:10em">沙河西渠中桥（右幅）</span>3*16m</div>
<div class="t cell" style="left:292.2px;top:305px;width:85.8px">K683+966.134</div>
<div class="t cell" style="left:381.4px;top:305px;width:86.1px">K684+009.134</div>
<div class="t cell" style="left:470.9px;top:305px;width:85.4px">K683+982.634</div>
<div class="t cell" style="left:559.7px;top:304.91px;width:47.8px"><span class="c" style="width:3em">已开工</span></div>
<div class="t cell" style="left:714.8px;top:305px;width:46.2px">38</div>
<div class="t" style="left:6.2px;top:315px">22</div>
<div class="t cell" style="left:22.4px;top:315px;width:129px">QL</div>
<div class="t cell" style="left:154.8px;top:315px;width:134px">K682+133.5 <span class="c" style="width:10em">白洋淀特大桥（左幅）</span>30m+3-40m+...</div>
<div class="t cell" style="left:292.2px;top:315px;width:85.8px">K682+039.46</div>
<div class="t cell" style="left:381.4px;top:315px;width:86.1px">K682+227.54</div>
<div class="t cell" style="left:470.9px;top:315px;width:85.4px">K682+133.5</div>
<div class="t cell" style="left:559.7px;top:314.59px;width:47.8px"><span class="c" style="width:3em">已开工</span></div>
<div class="t cell" style="left:714.8px;top:315px;width:46.2px">39</div>
<div class="t" style="left:6.2px;top:324px">23</div>
<div class="t cell" style="left:22.4px;top:324px;width:129px">QL</div>
<div class="t cell" style="left:154.8px;top:324px;width:134px">K682+133.5 <span class="c" style="width:10em">白洋淀特大桥（右幅）</span>30m+3-40m+...</div>
<div class="t cell" style="left:292.2px;top:324px;width:85.8px">K682+039.46</div>
<div class="t cell" style="left:381.4px;top:324px;width:86.1px">K682+227.54</div>
<div class="t cell" style="left:470.9px;top:324px;width:85.4px">K682+133.5</div>
<div class="t cell" style="left:559.7px;top:324.27px;width:47.8px"><span class="c" style="width:3em">已开工</span></div>
<div class="t cell" style="left:714.8px;top:324px;width:46.2px">40</div>
<div class="t" style="left:6.2px;top:334px">24</div>
<div class="t cell" style="left:22.4px;top:334px;width:129px">QL</div>
<div class="t cell" style="left:154.8px;top:334px;width:134px">K678+497.703 <span class="c" style="width:10em">龙石渠排中桥（左幅）</span>6*16m</div>
<div class="t cell" style="left:292.2px;top:334px;width:85.8px">K678+447.203</div>
<div class="t cell" style="left:381.4px;top:334px;width:86.1px">K678+548.203</div>
<div class="t cell" style="left:470.9px;top:334px;width:85.4px">K678+497.703</div>
<div class="t cell" style="left:559.7px;top:333.94px;width:47.8px"><span class="c" style="width:3em">已开工</span></div>
<div class="t cell" style="left:714.8px;top:334px;width:46.2px">44</div>
<div class="t" style="left:6.2px;top:344px">25</div>
<div class="t cell" style="left:22.4px;top:344px;width:129px">QL</div>
<div class="t cell" style="left:154.8px;top:344px;width:134px">K678+497.703 <span class="c" style="width:10em">龙石渠排中桥（右幅）</span>6*10m</div>
<div class="t cell" style="left:292.2px;top:344px;width:85.8px">K678+447.203</div>
<div class="t cell" style="left:381.4px;top:344px;width:86.1px">K678+548.203</div>
<div class="t cell" style="left:470.9px;top:344px;width:85.4px">K678+497.703</div>
<div class="t cell" style="left:559.7px;top:343.62px;width:47.8px"><span class="c" style="width:3em">已开工</span></div>
<div class="t cell" style="left:714.8px;top:344px;width:46.2px">45</div>
<div class="t" style="left:6.2px;top:353px">26</div>
<div class="t cell" style="left:22.4px;top:353px;width:129px">QL</div>
<div class="t cell" style="left:154.8px;top:353px;width:134px">K672+501.669 <span class="c" style="width:12em">京雄高速分离大桥（左幅）</span>8-20m</div>
<div class="t cell" style="left:292.2px;top:353px;width:85.8px">K672+418.669</div>
<div class="t cell" style="left:381.4px;top:353px;width:86.1px">K672+584.669</div>
<div class="t cell" style="left:470.9px;top:353px;width:85.4px">K672+501.669</div>
<div class="t cell" style="left:559.7px;top:353.3px;width:47.8px"><span class="c" style="width:3em">已开工</span></div>
<div class="t cell" style="left:714.8px;top:353px;width:46.2px">46</div>
<div class="t" style="left:6.2px;top:363px">27</div>
<div class="t cell" style="left:22.4px;top:363px;width:129px">QL</div>
<div class="t cell" style="left:154.8px;top:363px;width:134px">K672+501.669 <span class="c" style="width:12em">京雄高速分离大桥（右幅）</span>8-20m</div>
<div class="t cell" style="left:292.2px;top:363px;width:85.8px">K672+418.669</div>
<div class="t cell" style="left:381.4px;top:363px;width:86.1px">K672+584.669</div>
<div class="t cell" style="left:470.9px;top:363px;width:85.4px">K672+501.669</div>
<div class="t cell" style="left:559.7px;top:362.98px;width:47.8px"><span class="c" style="width:3em">已开工</span></div>
<div class="t cell" style="left:714.8px;top:363px;width:46.2px">48</div>
<div class="t" style="left:6.2px;top:373px">28</div>
<div class="t cell" style="left:22.4px;top:373px;width:129px">QL</div>
<div class="t cell" style="left:154.8px;top:373px;width:134px">K668+273.858 <span class="c" style="width:6em">中桥（左幅）</span>3*13m</div>
<div class="t cell" style="left:292.2px;top:373px;width:85.8px">K668+251.858</div>
<div class="t cell" style="left:381.4px;top:373px;width:86.1px">K668+295.858</div>
<div class="t cell" style="left:470.9px;top:373px;width:85.4px">K668+273.858</div>
<div class="t cell" style="left:559.7px;top:372.66px;width:47.8px"><span class="c" style="width:3em">已开工</span></div>
<div class="t cell" style="left:610.9px;top:373px;width:100.5px">1.<span class="c" style="width:1em">改</span>2</div>
<div class="t cell" style="left:714.8px;top:373px;width:46.2px">50</div>
<div class="t" style="left:6.2px;top:382px">29</div>
<div class="t cell" style="left:22.4px;top:382px;width:129px">QL</div>
<div class="t cell" style="left:154.8px;top:382px;width:134px">K668+273.858 <span class="c" style="width:6em">中桥（右幅）</span>3*13m</div>
<div class="t cell" style="left:292.2px;top:382px;width:85.8px">K668+251.858</div>
<div class="t cell" style="left:381.4px;top:382px;width:86.1px">K668+295.858</div>
<div class="t cell" style="left:470.9px;top:382px;width:85.4px">K668+273.858</div>
<div class="t cell" style="left:559.7px;top:382.33px;width:47.8px"><span class="c" style="width:3em">已开工</span></div>
<div class="t cell" style="left:714.8px;top:382px;width:46.2px">52</div>
<div class="t" style="left:6.2px;top:392px">30</div>
<div class="t cell" style="left:22.4px;top:392px;width:129px">LH</div>
<div class="t cell" style="left:154.8px;top:392px;width:134px">K659+890-K688+453.854<span class="c" style="width:4em">绿化工程</span></div>
<div class="t cell" style="left:559.7px;top:392.01px;width:47.8px"><span class="c" style="width:3em">已开工</span></div>
<div class="t cell" style="left:714.8px;top:392px;width:46.2px">69</div>
<div class="t" style="left:6.2px;top:402px">31</div>
<div class="t cell" style="left:22.4px;top:402px;width:129px">JA</div>
<div class="t cell" style="left:154.8px;top:402px;width:134px">K659+090~K690+020.78<span class="c" style="width:6em">交通安全设施</span></div>
<div class="t cell" style="left:559.7px;top:401.69px;width:47.8px"><span class="c" style="width:3em">已开工</span></div>
<div class="t cell" style="left:714.8px;top:402px;width:46.2px">70</div>
<div class="t" style="left:6.2px;top:411px">32</div>
<div class="t cell" style="left:22.4px;top:411px;width:129px">SP</div>
<div class="t cell" style="left:154.8px;top:411px;width:134px">K659+890~K688+453.854<span class="c" style="width:5em">声屏障工程</span></div>
<div class="t cell" style="left:559.7px;top:411.37px;width:47.8px"><span class="c" style="width:3em">已审核</span></div>
<div class="t cell" style="left:714.8px;top:411px;width:46.2px">71</div>
<div class="t" style="left:6.2px;top:421px">33</div>
<div class="t cell" style="left:22.4px;top:421px;width:129px">QL</div>
<div class="t cell" style="left:154.8px;top:421px;width:134px">AK0+483.110A<span class="c" style="width:8em">匝道桥现浇箱梁桥</span></div>
<div class="t cell" style="left:559.7px;top:421.05px;width:47.8px"><span class="c" style="width:3em">已开工</span></div>
<div class="t cell" style="left:714.8px;top:421px;width:46.2px">72</div>
<div class="t" style="left:6.2px;top:431px">34</div>
<div class="t cell" style="left:22.4px;top:431px;width:129px">QL</div>
<div class="t cell" style="left:154.8px;top:431px;width:134px">K661+102.760<span class="c" style="width:9em">分离式立交现浇箱梁</span></div>
<div class="t cell" style="left:559.7px;top:430.72px;width:47.8px"><span class="c" style="width:3em">已开工</span></div>
<div class="t cell" style="left:714.8px;top:431px;width:46.2px">73</div>
<div class="t" style="left:6.2px;top:440px">35</div>
<div class="t cell" style="left:22.4px;top:440px;width:129px">QL</div>
<div class="t cell" style="left:154.8px;top:440px;width:134px">K661+655.953<span class="c" style="width:9em">分离式立交现浇箱梁</span></div>
<div class="t cell" style="left:559.7px;top:440.4px;width:47.8px"><span class="c" style="width:3em">已开工</span></div>
<div class="t cell" style="left:714.8px;top:440px;width:46.2px">74</div>
<div class="a" style="left:771px;top:99px;width:114px;height:347px;background:#fff"></div>
<div class="a" style="left:771px;top:99px;width:114px;height:1px;background:#cdd3e3"></div>
<div class="a" style="left:771px;top:100px;width:8.6px;height:167px;background:#f7f8fc;border-right:.8px solid #cdd2e2"></div>
<div class="a" style="left:779.6px;top:100px;width:105.4px;height:8.7px;background:#f8f9fc"></div>
<div class="t" style="left:782px;top:101px"><span class="c" style="width:2em">名称</span></div>
<svg class="a" style="left:774.7px;top:112px;width:1.8px;height:3px" viewBox="0 0 4 6"><path d="M0 0 L4 3 L0 6Z" fill="#222"/></svg>
<div class="a" style="left:796.2px;top:108.7px;width:88.8px;height:8.9px;background:#fff"></div>
<svg class="a" style="left:796.2px;top:108.7px;width:88.8px;height:8.9px" viewBox="0 0 88.8 8.9"><path d="M88.8 .45 H.3 V8.5 H88.8" fill="none" stroke="#23232b" stroke-width=".6" stroke-dasharray="5 2.6"/></svg>
<svg class="a" style="left:783px;top:112.1px;width:3.1px;height:3.1px" viewBox="0 0 6 6"><path d="M6 0 V6 H0Z" fill="#2a3857"/></svg>
<svg class="a" style="left:788.1px;top:110.3px;width:7.8px;height:5.8px" viewBox="0 0 16 12"><path d="M.5 2.5 H6 L7.5 .5 H14 V3 H.5Z" fill="#e7c463"/><rect x=".5" y="2.4" width="15" height="9.4" rx=".8" fill="#f3d885"/><rect x=".5" y="10" width="15" height="1.8" fill="#e0bb52"/></svg>
<div class="t" style="left:798.5px;top:111px"><span class="c" style="width:3em">资料员</span></div>
<div class="a" style="left:804px;top:118.09px;width:81px;height:7.59px;background:#e7f7fc"></div>
<svg class="a" style="left:799px;top:118.79px;width:4.2px;height:6.2px" viewBox="0 0 9 13"><path d="M.6 .6 H5.8 L8.4 3.3 V12.4 H.6Z" fill="#f4f7fa" stroke="#7f8ca3" stroke-width="1.1"/><path d="M2.2 5 H6.8 M2.2 7.2 H6.8 M2.2 9.4 H6.8" stroke="#9aa6b8" stroke-width=".9"/></svg>
<div class="t" style="left:807px;top:119.79px"><span class="c" style="width:3em">白雪峰</span></div>
<div class="a" style="left:796.2px;top:126.28px;width:88.8px;height:8.9px;background:#fff"></div>
<svg class="a" style="left:796.2px;top:126.28px;width:88.8px;height:8.9px" viewBox="0 0 88.8 8.9"><path d="M88.8 .3 H.3 V8.6 H88.8" fill="none" stroke="#b4bbd4" stroke-width=".55"/></svg>
<svg class="a" style="left:783px;top:129.68px;width:3.1px;height:3.1px" viewBox="0 0 6 6"><path d="M6 0 V6 H0Z" fill="#2a3857"/></svg>
<svg class="a" style="left:788.1px;top:127.88px;width:7.8px;height:5.8px" viewBox="0 0 16 12"><path d="M.5 2.5 H6 L7.5 .5 H14 V3 H.5Z" fill="#e7c463"/><rect x=".5" y="2.4" width="15" height="9.4" rx=".8" fill="#f3d885"/><rect x=".5" y="10" width="15" height="1.8" fill="#e0bb52"/></svg>
<div class="t" style="left:798.5px;top:128.58px"><span class="c" style="width:3em">测量员</span></div>
<div class="a" style="left:804px;top:135.67px;width:81px;height:7.59px;background:#e7f7fc"></div>
<svg class="a" style="left:799px;top:136.37px;width:4.2px;height:6.2px" viewBox="0 0 9 13"><path d="M.6 .6 H5.8 L8.4 3.3 V12.4 H.6Z" fill="#f4f7fa" stroke="#7f8ca3" stroke-width="1.1"/><path d="M2.2 5 H6.8 M2.2 7.2 H6.8 M2.2 9.4 H6.8" stroke="#9aa6b8" stroke-width=".9"/></svg>
<div class="t" style="left:807px;top:137.37px"><span class="c" style="width:3em">钱宏涛</span></div>
<div class="a" style="left:796.2px;top:143.86px;width:88.8px;height:8.9px;background:#fff"></div>
<svg class="a" style="left:796.2px;top:143.86px;width:88.8px;height:8.9px" viewBox="0 0 88.8 8.9"><path d="M88.8 .3 H.3 V8.6 H88.8" fill="none" stroke="#b4bbd4" stroke-width=".55"/></svg>
<svg class="a" style="left:783px;top:147.26px;width:3.1px;height:3.1px" viewBox="0 0 6 6"><path d="M6 0 V6 H0Z" fill="#2a3857"/></svg>
<svg class="a" style="left:788.1px;top:145.46px;width:7.8px;height:5.8px" viewBox="0 0 16 12"><path d="M.5 2.5 H6 L7.5 .5 H14 V3 H.5Z" fill="#e7c463"/><rect x=".5" y="2.4" width="15" height="9.4" rx=".8" fill="#f3d885"/><rect x=".5" y="10" width="15" height="1.8" fill="#e0bb52"/></svg>
<div class="t" style="left:798.5px;top:146.16px"><span class="c" style="width:2em">质量</span>/<span class="c" style="width:2em">检测</span></div>
<div class="a" style="left:804px;top:153.25px;width:81px;height:7.59px;background:#e7f7fc"></div>
<svg class="a" style="left:799px;top:153.95px;width:4.2px;height:6.2px" viewBox="0 0 9 13"><path d="M.6 .6 H5.8 L8.4 3.3 V12.4 H.6Z" fill="#f4f7fa" stroke="#7f8ca3" stroke-width="1.1"/><path d="M2.2 5 H6.8 M2.2 7.2 H6.8 M2.2 9.4 H6.8" stroke="#9aa6b8" stroke-width=".9"/></svg>
<div class="t" style="left:807px;top:154.95px"><span class="c" style="width:2em">朱腾</span></div>
<div class="a" style="left:796.2px;top:161.44px;width:88.8px;height:8.9px;background:#fff"></div>
<svg class="a" style="left:796.2px;top:161.44px;width:88.8px;height:8.9px" viewBox="0 0 88.8 8.9"><path d="M88.8 .3 H.3 V8.6 H88.8" fill="none" stroke="#b4bbd4" stroke-width=".55"/></svg>
<svg class="a" style="left:783px;top:164.84px;width:3.1px;height:3.1px" viewBox="0 0 6 6"><path d="M6 0 V6 H0Z" fill="#2a3857"/></svg>
<svg class="a" style="left:788.1px;top:163.04px;width:7.8px;height:5.8px" viewBox="0 0 16 12"><path d="M.5 2.5 H6 L7.5 .5 H14 V3 H.5Z" fill="#e7c463"/><rect x=".5" y="2.4" width="15" height="9.4" rx=".8" fill="#f3d885"/><rect x=".5" y="10" width="15" height="1.8" fill="#e0bb52"/></svg>
<div class="t" style="left:798.5px;top:163.74px"><span class="c" style="width:6em">记录（旁站）</span></div>
<div class="a" style="left:804px;top:170.83px;width:81px;height:7.59px;background:#e7f7fc"></div>
<svg class="a" style="left:799px;top:171.53px;width:4.2px;height:6.2px" viewBox="0 0 9 13"><path d="M.6 .6 H5.8 L8.4 3.3 V12.4 H.6Z" fill="#f4f7fa" stroke="#7f8ca3" stroke-width="1.1"/><path d="M2.2 5 H6.8 M2.2 7.2 H6.8 M2.2 9.4 H6.8" stroke="#9aa6b8" stroke-width=".9"/></svg>
<div class="t" style="left:807px;top:172.53px"><span class="c" style="width:3em">刘玉军</span></div>
<div class="a" style="left:796.2px;top:179.02px;width:88.8px;height:8.9px;background:#fff"></div>
<svg class="a" style="left:796.2px;top:179.02px;width:88.8px;height:8.9px" viewBox="0 0 88.8 8.9"><path d="M88.8 .3 H.3 V8.6 H88.8" fill="none" stroke="#b4bbd4" stroke-width=".55"/></svg>
<svg class="a" style="left:783px;top:182.42px;width:3.1px;height:3.1px" viewBox="0 0 6 6"><path d="M6 0 V6 H0Z" fill="#2a3857"/></svg>
<svg class="a" style="left:788.1px;top:180.62px;width:7.8px;height:5.8px" viewBox="0 0 16 12"><path d="M.5 2.5 H6 L7.5 .5 H14 V3 H.5Z" fill="#e7c463"/><rect x=".5" y="2.4" width="15" height="9.4" rx=".8" fill="#f3d885"/><rect x=".5" y="10" width="15" height="1.8" fill="#e0bb52"/></svg>
<div class="t" style="left:798.5px;top:181.32px"><span class="c" style="width:2em">质检</span></div>
<div class="a" style="left:804px;top:188.41px;width:81px;height:7.59px;background:#e7f7fc"></div>
<svg class="a" style="left:799px;top:189.11px;width:4.2px;height:6.2px" viewBox="0 0 9 13"><path d="M.6 .6 H5.8 L8.4 3.3 V12.4 H.6Z" fill="#f4f7fa" stroke="#7f8ca3" stroke-width="1.1"/><path d="M2.2 5 H6.8 M2.2 7.2 H6.8 M2.2 9.4 H6.8" stroke="#9aa6b8" stroke-width=".9"/></svg>
<div class="t" style="left:807px;top:190.11px"><span class="c" style="width:3em">许宏强</span></div>
<div class="a" style="left:796.2px;top:196.6px;width:88.8px;height:8.9px;background:#fff"></div>
<svg class="a" style="left:796.2px;top:196.6px;width:88.8px;height:8.9px" viewBox="0 0 88.8 8.9"><path d="M88.8 .3 H.3 V8.6 H88.8" fill="none" stroke="#b4bbd4" stroke-width=".55"/></svg>
<svg class="a" style="left:783px;top:200px;width:3.1px;height:3.1px" viewBox="0 0 6 6"><path d="M6 0 V6 H0Z" fill="#2a3857"/></svg>
<svg class="a" style="left:788.1px;top:198.2px;width:7.8px;height:5.8px" viewBox="0 0 16 12"><path d="M.5 2.5 H6 L7.5 .5 H14 V3 H.5Z" fill="#e7c463"/><rect x=".5" y="2.4" width="15" height="9.4" rx=".8" fill="#f3d885"/><rect x=".5" y="10" width="15" height="1.8" fill="#e0bb52"/></svg>
<div class="t" style="left:798.5px;top:198.9px"><span class="c" style="width:3em">材料人</span></div>
<div class="a" style="left:804px;top:205.99px;width:81px;height:7.59px;background:#e7f7fc"></div>
<svg class="a" style="left:799px;top:206.69px;width:4.2px;height:6.2px" viewBox="0 0 9 13"><path d="M.6 .6 H5.8 L8.4 3.3 V12.4 H.6Z" fill="#f4f7fa" stroke="#7f8ca3" stroke-width="1.1"/><path d="M2.2 5 H6.8 M2.2 7.2 H6.8 M2.2 9.4 H6.8" stroke="#9aa6b8" stroke-width=".9"/></svg>
<div class="t" style="left:807px;top:207.69px"><span class="c" style="width:3em">谭书成</span></div>
<div class="a" style="left:796.2px;top:214.18px;width:88.8px;height:8.9px;background:#fff"></div>
<svg class="a" style="left:796.2px;top:214.18px;width:88.8px;height:8.9px" viewBox="0 0 88.8 8.9"><path d="M88.8 .3 H.3 V8.6 H88.8" fill="none" stroke="#b4bbd4" stroke-width=".55"/></svg>
<svg class="a" style="left:783px;top:217.58px;width:3.1px;height:3.1px" viewBox="0 0 6 6"><path d="M6 0 V6 H0Z" fill="#2a3857"/></svg>
<svg class="a" style="left:788.1px;top:215.78px;width:7.8px;height:5.8px" viewBox="0 0 16 12"><path d="M.5 2.5 H6 L7.5 .5 H14 V3 H.5Z" fill="#e7c463"/><rect x=".5" y="2.4" width="15" height="9.4" rx=".8" fill="#f3d885"/><rect x=".5" y="10" width="15" height="1.8" fill="#e0bb52"/></svg>
<div class="t" style="left:798.5px;top:216.48px"><span class="c" style="width:2em">技术</span>/<span class="c" style="width:5em">验证负责人</span></div>
<div class="a" style="left:804px;top:223.57px;width:81px;height:7.59px;background:#e7f7fc"></div>
<svg class="a" style="left:799px;top:224.27px;width:4.2px;height:6.2px" viewBox="0 0 9 13"><path d="M.6 .6 H5.8 L8.4 3.3 V12.4 H.6Z" fill="#f4f7fa" stroke="#7f8ca3" stroke-width="1.1"/><path d="M2.2 5 H6.8 M2.2 7.2 H6.8 M2.2 9.4 H6.8" stroke="#9aa6b8" stroke-width=".9"/></svg>
<div class="t" style="left:807px;top:225.27px"><span class="c" style="width:3em">许宏强</span></div>
<div class="a" style="left:796.2px;top:231.76px;width:88.8px;height:8.9px;background:#fff"></div>
<svg class="a" style="left:796.2px;top:231.76px;width:88.8px;height:8.9px" viewBox="0 0 88.8 8.9"><path d="M88.8 .3 H.3 V8.6 H88.8" fill="none" stroke="#b4bbd4" stroke-width=".55"/></svg>
<svg class="a" style="left:783px;top:235.16px;width:3.1px;height:3.1px" viewBox="0 0 6 6"><path d="M6 0 V6 H0Z" fill="#2a3857"/></svg>
<svg class="a" style="left:788.1px;top:233.36px;width:7.8px;height:5.8px" viewBox="0 0 16 12"><path d="M.5 2.5 H6 L7.5 .5 H14 V3 H.5Z" fill="#e7c463"/><rect x=".5" y="2.4" width="15" height="9.4" rx=".8" fill="#f3d885"/><rect x=".5" y="10" width="15" height="1.8" fill="#e0bb52"/></svg>
<div class="t" style="left:798.5px;top:234.06px"><span class="c" style="width:5em">监理工程师</span></div>
<div class="a" style="left:804px;top:241.15px;width:81px;height:7.59px;background:#e7f7fc"></div>
<svg class="a" style="left:799px;top:241.85px;width:4.2px;height:6.2px" viewBox="0 0 9 13"><path d="M.6 .6 H5.8 L8.4 3.3 V12.4 H.6Z" fill="#f4f7fa" stroke="#7f8ca3" stroke-width="1.1"/><path d="M2.2 5 H6.8 M2.2 7.2 H6.8 M2.2 9.4 H6.8" stroke="#9aa6b8" stroke-width=".9"/></svg>
<div class="t" style="left:807px;top:242.85px"><span class="c" style="width:3em">张玉洁</span></div>
<div class="a" style="left:796.2px;top:249.34px;width:88.8px;height:8.9px;background:#fff"></div>
<svg class="a" style="left:796.2px;top:249.34px;width:88.8px;height:8.9px" viewBox="0 0 88.8 8.9"><path d="M88.8 .3 H.3 V8.6 H88.8" fill="none" stroke="#b4bbd4" stroke-width=".55"/></svg>
<svg class="a" style="left:783px;top:252.74px;width:3.1px;height:3.1px" viewBox="0 0 6 6"><path d="M6 0 V6 H0Z" fill="#2a3857"/></svg>
<svg class="a" style="left:788.1px;top:250.94px;width:7.8px;height:5.8px" viewBox="0 0 16 12"><path d="M.5 2.5 H6 L7.5 .5 H14 V3 H.5Z" fill="#e7c463"/><rect x=".5" y="2.4" width="15" height="9.4" rx=".8" fill="#f3d885"/><rect x=".5" y="10" width="15" height="1.8" fill="#e0bb52"/></svg>
<div class="t" style="left:798.5px;top:251.64px"><span class="c" style="width:5em">测量工程师</span></div>
<div class="a" style="left:804px;top:258.73px;width:81px;height:7.59px;background:#e7f7fc"></div>
<svg class="a" style="left:799px;top:259.43px;width:4.2px;height:6.2px" viewBox="0 0 9 13"><path d="M.6 .6 H5.8 L8.4 3.3 V12.4 H.6Z" fill="#f4f7fa" stroke="#7f8ca3" stroke-width="1.1"/><path d="M2.2 5 H6.8 M2.2 7.2 H6.8 M2.2 9.4 H6.8" stroke="#9aa6b8" stroke-width=".9"/></svg>
<div class="t" style="left:807px;top:260.43px"><span class="c" style="width:3em">孙德华</span></div>
<div class="a" style="left:771px;top:435px;width:114px;height:11px;background:#d0d6e7"></div>
<div class="t" style="left:776px;top:438.5px"><span class="c" style="width:8em">工程划分人员设置</span></div>
<div class="a" style="left:885px;top:99px;width:2px;height:347px;background:#c5cae0"></div>
<div class="a" style="left:769.8px;top:298.6px;width:125px;height:14.4px;background:#fff;border-radius:3px;box-shadow:0 0 2.2px rgba(60,70,100,.35)"></div>
<svg class="a" style="left:773.4px;top:301.2px;width:9.4px;height:9.4px" viewBox="0 0 20 20"><path d="M16.5 4.2 C12 2.2 4.5 3 4.2 7 C4 10.5 15.5 9 15.6 13 C15.7 17 7 17.2 2.8 15.2" fill="none" stroke="#f26a14" stroke-width="3.2" stroke-linecap="round"/></svg>
<div class="a" style="left:786.3px;top:302.2px;width:0.5px;height:7.4px;background:#e4e4e4"></div>
<svg class="a" style="left:791.2px;top:301.8px;width:7.8px;height:8.4px" viewBox="0 0 16 17"><g fill="none" stroke="#222" stroke-width="1.7"><rect x="1.5" y="4.5" width="13" height="7"/><path d="M8 .5 V16.5"/></g></svg>
<svg class="a" style="left:804.8px;top:302.2px;width:6px;height:7.4px" viewBox="0 0 12 15"><circle cx="3" cy="3.2" r="1.9" fill="none" stroke="#222" stroke-width="1.4"/><circle cx="8.6" cy="10.2" r="1.9" fill="#222"/><path d="M9.8 11 Q10 13.4 8 14.6" stroke="#222" stroke-width="1.3" fill="none"/></svg>
<svg class="a" style="left:817px;top:301.6px;width:7.2px;height:8.8px" viewBox="0 0 14 17"><g fill="none" stroke="#222" stroke-width="1.6"><path d="M2.2 11.5 C3.8 9.5 3 7 3.6 5 C4.4 2.2 9.6 2.2 10.4 5 C11 7 10.2 9.5 11.8 11.5 Z"/><path d="M5 13.6 Q7 16.4 9 13.6"/></g></svg>
<svg class="a" style="left:831.2px;top:302px;width:8px;height:8px" viewBox="0 0 16 16"><g fill="none" stroke="#222" stroke-width="1.6"><rect x="1.2" y="1.2" width="13.6" height="13.6" rx="1.6"/><path d="M5 5.2 V7.2 M11 5.2 V7.2 M4.6 9.8 Q8 13 11.4 9.8"/></g></svg>
<svg class="a" style="left:845.2px;top:301px;width:9.6px;height:9.6px" viewBox="0 0 20 20"><defs><linearGradient id="gS" x1="0" y1="0" x2="1" y2="1"><stop offset="0" stop-color="#3d7bf2"/><stop offset="1" stop-color="#c65be8"/></linearGradient></defs><path d="M1.5 6.5 L6.5 4 Q10 6.5 13.5 4 L18.5 6.5 L16.4 10.6 L14.6 9.8 V17.5 H5.4 V9.8 L3.6 10.6 Z" fill="url(#gS)"/><circle cx="16.6" cy="3.4" r="2.6" fill="#f03a3a"/></svg>
<svg class="a" style="left:859.4px;top:301.8px;width:8.6px;height:8.6px" viewBox="0 0 18 18"><g fill="none" stroke="#222" stroke-width="1.6"><circle cx="5" cy="5" r="3"/><circle cx="13" cy="5" r="3"/><circle cx="5" cy="13" r="3"/><circle cx="13" cy="13" r="3"/></g></svg>
<svg class="a" style="left:873.2px;top:300.8px;width:10.4px;height:10.4px" viewBox="0 0 20 20"><circle cx="10" cy="10" r="9.4" fill="#fbf3e6" stroke="#ead9be" stroke-width=".8"/><path d="M3 8 Q8 3.5 14.5 7.5 L12 11.5 Q7 12.5 3 8Z" fill="#e9722a"/><circle cx="7" cy="8.4" r="1.3" fill="#333"/><path d="M16.5 3 L17.2 5 L19.2 5.5 L17.2 6.2 L16.5 8.2 L15.8 6.2 L13.8 5.5 L15.8 5Z" fill="#f5c518"/></svg>
<div class="a" style="left:0px;top:445px;width:887px;height:15px;background:#2a3857;border-top:1px solid #959cb0"></div>
<svg class="a" style="left:3.8px;top:449.5px;width:6.4px;height:7.6px" viewBox="0 0 12 14"><path d="M1.5 1.5 L5 6.5 M10.5 1.5 L7 6.5 M1.5 1.5 V5 M1.5 1.5 H4.6 M10.5 1.5 V5 M10.5 1.5 H7.4" stroke="#7fae3e" stroke-width="1.5" fill="none"/><path d="M6 6 V11.5 M3.6 12.6 H8.4" stroke="#5b6a50" stroke-width="1.4" fill="none"/></svg>
<div class="t w" style="left:12.3px;top:450.6px"><span class="c" style="width:7em">登录状态：在线</span></div>
<div class="a" style="left:55.2px;top:448.6px;width:1px;height:9.4px;background:#c9cfe0"></div>
<div class="t w" style="left:60.8px;top:451px"><span class="c" style="width:4em">网络状态</span>:<span class="c" style="width:1em">良</span></div>
<div class="a" style="left:93.6px;top:448.6px;width:1px;height:9.4px;background:#55618a"></div>
<svg class="a" style="left:97.6px;top:449.5px;width:8px;height:7.6px" viewBox="0 0 16 15"><path d="M1.2 8 L8 1.2 H14.6 V7.6 L7.8 14 Z" fill="none" stroke="#4a9be8" stroke-width="1.8"/></svg>
<div class="t w" style="left:107.6px;top:450.6px"><span class="c" style="width:8em">软件信息：网络版</span></div>
<svg class="a" style="left:155.4px;top:449.5px;width:7.4px;height:7.4px" viewBox="0 0 14 14"><path d="M1 10 L8 2.5 L12.5 6.5 L5.5 13 Z" fill="#f0a22c"/><path d="M1 10 L5.5 13 L.6 13.6Z" fill="#f7e2b0"/></svg>
<div class="t w" style="left:165.4px;top:450.6px"><span class="c" style="width:7em">部署模板服务器</span></div>
<div class="a" style="left:208.4px;top:448.6px;width:1px;height:9.4px;background:#c9cfe0"></div>
<svg class="a" style="left:212.2px;top:449.5px;width:6.4px;height:7.2px" viewBox="0 0 13 15"><path d="M2 1 V14.5" stroke="#d8dce8" stroke-width="1.5"/><path d="M3 1.6 Q6.5 .2 8.5 2.2 Q10.5 4 12.6 2.8 V8.4 Q10.5 9.6 8.5 7.8 Q6.5 6 3 7.4 Z" fill="#5cb83a"/></svg>
<div class="t w" style="left:221.4px;top:451px"><span class="c" style="width:5em">当前项目：</span>G18<span class="c" style="width:12em">荣乌高速新线京台至京港澳</span></div>
<svg class="a" style="left:330.6px;top:449.5px;width:6.6px;height:7.8px" viewBox="0 0 12 14"><circle cx="6" cy="3.8" r="3" fill="#f0c49a"/><path d="M.8 13.6 Q.8 7.6 6 7.6 Q11.2 7.6 11.2 13.6Z" fill="#d9822c"/></svg>
<div class="t w" style="left:340.4px;top:450.6px"><span class="c" style="width:8em">当前用户：胡海波</span></div>
<svg class="a" style="left:388.4px;top:449.5px;width:7.6px;height:7.8px" viewBox="0 0 14 14"><circle cx="6.5" cy="7.5" r="5.4" fill="#f4c430"/><circle cx="4.6" cy="6.6" r=".9" fill="#553"/><circle cx="8.4" cy="6.6" r=".9" fill="#553"/><path d="M4 9.4 Q6.5 11.6 9 9.4" stroke="#553" stroke-width=".9" fill="none"/><path d="M9 1 L13.4 2.6 L11 5.4Z" fill="#e8492c"/></svg>
<div class="t w" style="left:398px;top:450.6px"><span class="c" style="width:8em">所属角色：管理员</span></div>
<svg class="a" style="left:446.6px;top:449.5px;width:7.6px;height:7.8px" viewBox="0 0 14 14"><circle cx="7" cy="7" r="5.8" fill="#4a8fe0"/><circle cx="7" cy="7" r="2.6" fill="#f2b53a"/><path d="M2 3 L12 11" stroke="#e7edf8" stroke-width="1.1"/></svg>
<div class="t w" style="left:456.2px;top:451px"><span class="c" style="width:6em">所属合同段：</span>RWSG-TJ3</div>
<svg class="a" style="left:521px;top:449.5px;width:7.8px;height:7.8px" viewBox="0 0 14 14"><circle cx="4.6" cy="5" r="3.6" fill="#f0a22c"/><circle cx="9.6" cy="8.6" r="3.8" fill="#f6c65a"/><circle cx="4.6" cy="5" r="1.4" fill="#b96c12"/></svg>
<div class="t w" style="left:531px;top:451px"><span class="c" style="width:5em">所属单位：</span>RWSG-TJ3</div>
<div class="a" style="left:591.2px;top:448.6px;width:1px;height:9.4px;background:#c9cfe0"></div>
<svg class="a" style="left:595.4px;top:449.5px;width:4.4px;height:8px" viewBox="0 0 8 15"><rect x=".8" y=".8" width="6.4" height="13.4" rx="1.2" fill="#d4dbee" stroke="#8e9ac0" stroke-width=".9"/><path d="M2.4 4 H5.6 M2.4 7 H5.6 M2.4 10 H5.6" stroke="#5f6b8f" stroke-width=".9"/></svg>
<div class="t w" style="left:601.6px;top:451px"><span class="c" style="width:5em">登录时间：</span>2025/12/11 17:19:38</div>
</body>
</html>
